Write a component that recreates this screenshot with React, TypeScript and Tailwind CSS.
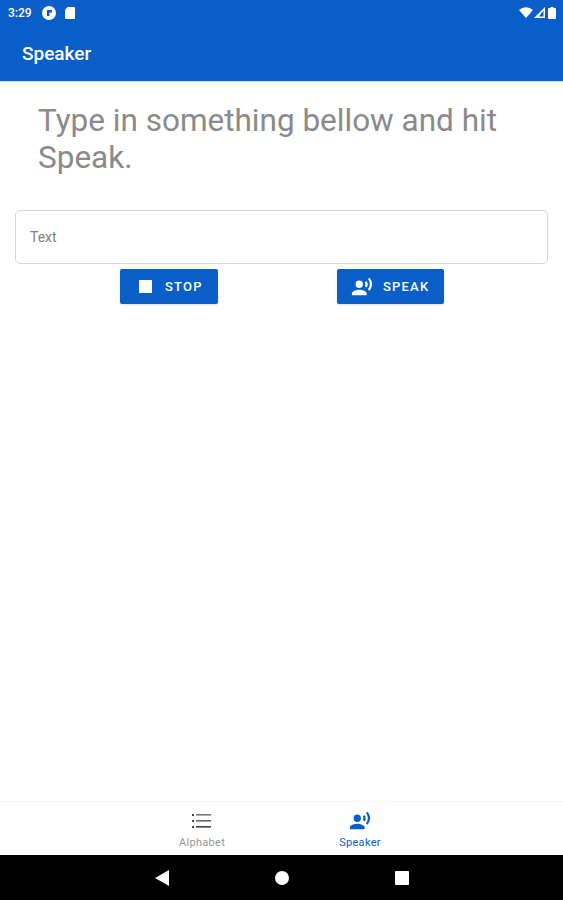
// material "record voice over" glyph, used on the speak button and the tab
function VoiceIcon({ className }: { className: string }) {
  return (
    <svg viewBox="0 0 24 24" className={className} fill="currentColor">
      <circle cx="9" cy="9" r="4" />
      <path d="M9 15c-2.67 0-8 1.34-8 4v2h16v-2c0-2.66-5.33-4-8-4z" />
      <path d="M15.08 7.05c.84 1.18.84 2.71 0 3.89l1.68 1.69c2.02-2.02 2.02-5.07 0-7.27l-1.68 1.69z" />
      <path d="M20.07 2l-1.63 1.63c2.77 3.02 2.77 7.56 0 10.74L20.07 16c3.9-3.89 3.91-9.95 0-14z" />
    </svg>
  );
}

export default function App() {
  return (
    <div className="w-[563px] h-[900px] flex flex-col bg-white font-['Roboto',sans-serif] overflow-hidden">
      {/* status bar + app bar */}
      <div className="h-[82px] shrink-0 bg-[#0a5ec7] text-white border-b border-[#d5dfee]">
        <div className="h-[25px] flex items-center pl-2 pr-[7px]">
          <span className="text-[12px] font-medium leading-none">3:29</span>
          <svg viewBox="0 0 14 14" className="w-[14px] h-[14px] ml-[10px]">
            <circle cx="7" cy="7" r="7" fill="#fff" />
            <path d="M5 4h5v2.5H7.4V10H5z" fill="#0a5ec7" />
          </svg>
          <svg viewBox="0 0 10 12" className="w-[10px] h-[12px] ml-[9px]" fill="#fff">
            <path d="M2.5 0H9a1 1 0 0 1 1 1v10a1 1 0 0 1-1 1H1a1 1 0 0 1-1-1V3z" />
          </svg>
          <div className="flex-1" />
          <svg viewBox="0 0 14 11" className="w-[14px] h-[11px]" fill="#fff">
            <path d="M0 3a10 10 0 0 1 14 0l-7 8z" />
          </svg>
          <svg viewBox="0 0 11 11" className="w-[11px] h-[11px] ml-px" fill="#fff">
            <path d="M11 0v11H0zM9.5 3.5L5 9.5h4.5z" fillRule="evenodd" />
          </svg>
          <svg viewBox="0 0 8 12" className="w-2 h-3 ml-[3px]" fill="#fff">
            <path d="M2.5 0h3v1H7a1 1 0 0 1 1 1v9a1 1 0 0 1-1 1H1a1 1 0 0 1-1-1V2a1 1 0 0 1 1-1h1.5z" />
          </svg>
        </div>
        <div className="pl-[22px] pt-[17px] text-[19px] leading-[24px] font-medium">Speaker</div>
      </div>

      {/* main content */}
      <div className="flex-1 flex flex-col">
        <p className="pl-[38px] pr-[50px] pt-[20px] text-[31.5px] leading-[37px] text-[#8a8a8a]">
          Type in something bellow and hit Speak.
        </p>
        <div className="mx-[15px] mt-[34px] h-[54px] rounded-[5px] border border-[#d6d6d6] flex items-center pl-[14px] text-[14px] text-[#808080]">
          Text
        </div>
        <div className="flex mt-[5px]">
          <button className="ml-[120px] w-[98px] h-[35px] rounded-[2px] bg-[#0a5ec7] text-white flex items-center pl-[19px] text-[13px] font-medium tracking-[1.2px] shadow-sm">
            <span className="w-[13px] h-[13px] bg-white" />
            <span className="ml-[13px]">STOP</span>
          </button>
          <button className="ml-[119px] w-[107px] h-[35px] rounded-[2px] bg-[#0a5ec7] text-white flex items-center pl-[14px] text-[13px] font-medium tracking-[1.2px] shadow-sm">
            <VoiceIcon className="w-[22px] h-[22px]" />
            <span className="ml-[10px]">SPEAK</span>
          </button>
        </div>
      </div>

      {/* bottom tabs */}
      <div className="h-[54px] shrink-0 border-t border-[#f4f4f4] flex pt-[8px]">
        <div className="ml-[162px] w-[80px] flex flex-col items-center text-[#969696]">
          <svg viewBox="0 0 20 18" className="w-[20px] h-[22px] py-[2px]" fill="#444">
            <rect x="0" y="2" width="2" height="2" />
            <rect x="0" y="8" width="2" height="2" />
            <rect x="0" y="14" width="2" height="2" />
            <rect x="4" y="2" width="15" height="1.6" fill="#777" />
            <rect x="4" y="8" width="15" height="1.6" fill="#666" />
            <rect x="4" y="14" width="15" height="1.6" />
          </svg>
          <span className="text-[11px] leading-[14px] mt-[4px] tracking-[0.3px]">Alphabet</span>
        </div>
        <div className="ml-[78px] w-[80px] flex flex-col items-center text-[#0a5ec7]">
          <VoiceIcon className="w-[22px] h-[22px]" />
          <span className="text-[11px] leading-[14px] mt-[4px] tracking-[0.3px]">Speaker</span>
        </div>
      </div>

      {/* android nav bar */}
      <div className="h-[45px] shrink-0 bg-black flex items-center">
        <svg viewBox="0 0 14 16" className="w-[14px] h-4 ml-[155px]" fill="#fff">
          <path d="M14 0v16L0 8z" />
        </svg>
        <div className="w-[14px] h-[14px] rounded-full bg-white ml-[106px]" />
        <div className="w-[14px] h-[14px] rounded-[1px] bg-white ml-[106px]" />
      </div>
    </div>
  );
}
